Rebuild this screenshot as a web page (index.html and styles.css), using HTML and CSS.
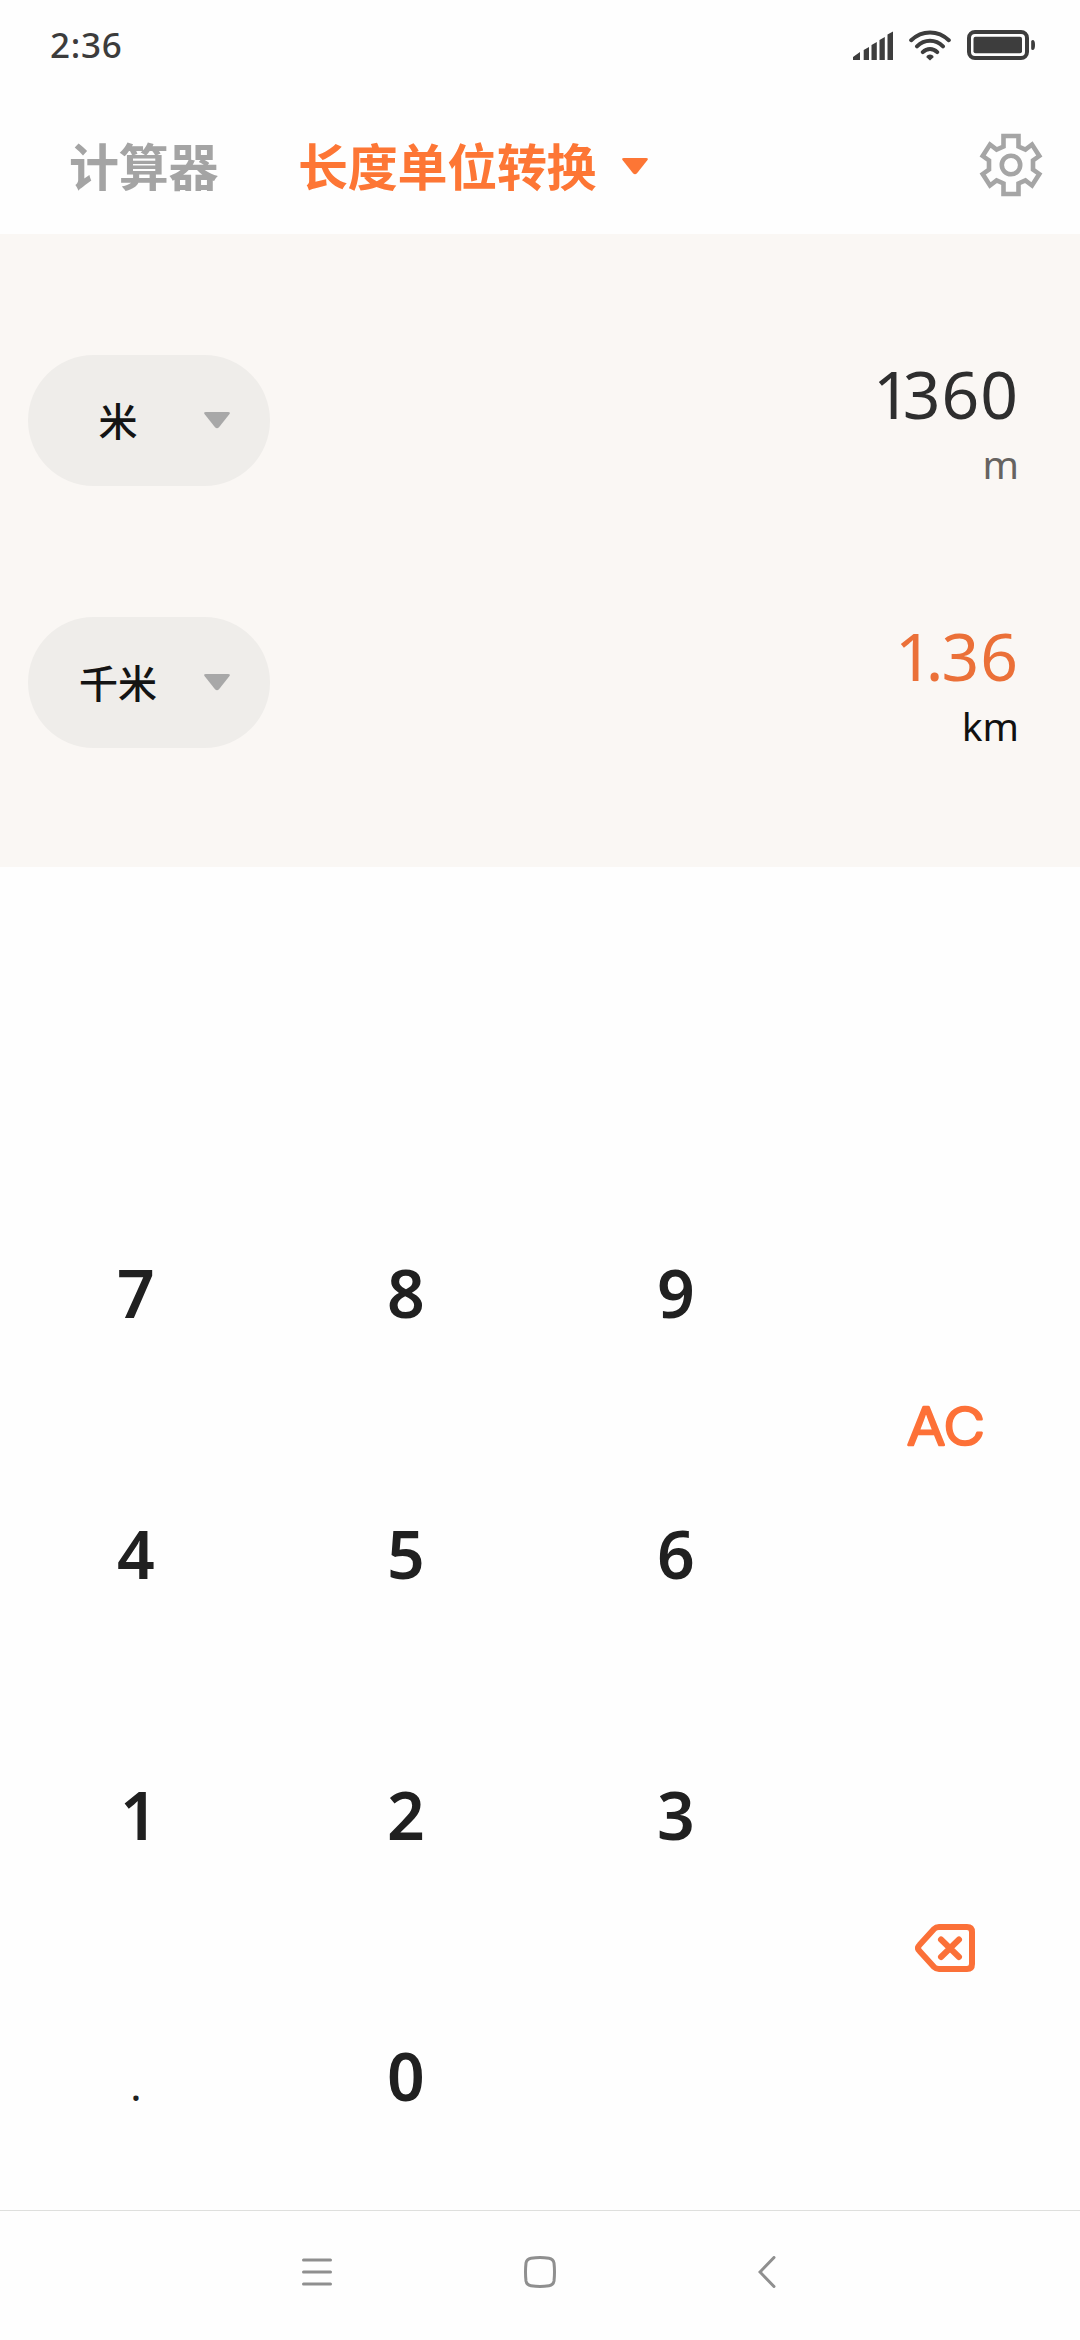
FILE: index.html
```
<!DOCTYPE html>
<html lang="zh-CN">
<head>
<meta charset="utf-8">
<title>长度单位转换</title>
<link rel="stylesheet" href="styles.css">
</head>
<body>
<div class="screen">
  <div class="status">
    <span class="time">2:36</span>
    <div class="status-icons">
      <svg class="signal" width="40" height="29" viewBox="0 0 40 29"><path d="M0 26l7-5v8H0zM10.700 19l5.300-3v13h-5.300zM18.500 14l5.300-3v18h-5.300zM26.500 9l5.300-3v23h-5.300zM34.500 3.500L40 .5V29h-5.500z"/></svg>
      <svg class="wifi" width="42" height="31" viewBox="0 0 42 31"><path class="arc" d="M2.200 10.200C13-.2 29-.2 39.800 10.200M8 16.300C15.500 8.800 26.500 8.800 34 16.300M13.800 22.100C18 18 24 18 28.200 22.100"/><path d="M21 30.500l-3.600-3.300c0-3.600 7.200-3.600 7.200 0z"/></svg>
      <svg class="battery" width="68" height="30" viewBox="0 0 68 30"><rect class="case" x="2" y="2" width="58" height="26" rx="6"/><rect x="6.500" y="6.700" width="48.500" height="16.600" rx="2"/><path d="M64.200 11.500q0-1.500 1.500-1.500 2.300 0 2.300 5t-2.300 5q-1.500 0-1.500-1.500z"/></svg>
    </div>
  </div>
  <header class="header">
    <span class="tab">计算器</span>
    <div class="tab active">长度单位转换<svg width="26" height="17" viewBox="0 0 26 17"><path d="M2 0h22q3 0 1.300 2.200L15 15.300q-2 2-4 0L.7 2.200Q-1 0 2 0z"/></svg></div>
    <svg class="gear" width="64" height="64" viewBox="-32 -32 64 64"><path d="M-7.500-29H7.500v10.500l6.900 3L21-20.500 28.300-9l-6.300 4.500v9L28.300 9 21 20.500l-6.600-5-6.900 3V29H-7.500V18.500l-6.900-3-6.600 5L-28.300 9l6.300-4.500v-9L-28.300-9-21-20.500l6.600 5 6.900-3z"/><circle r="9.200"/></svg>
  </header>
  <main class="panel">
    <section class="row">
      <div class="unit"><span class="unit-name">米</span><svg width="26" height="17" viewBox="0 0 26 17"><path d="M2 0h22q3 0 1.300 2.200L15 15.300q-2 2-4 0L.7 2.200Q-1 0 2 0z"/></svg></div>
      <div class="reading"><span class="value"><span class="lead">1</span>360</span><span class="symbol">m</span></div>
    </section>
    <section class="row result">
      <div class="unit"><span class="unit-name">千米</span><svg width="26" height="17" viewBox="0 0 26 17"><path d="M2 0h22q3 0 1.300 2.200L15 15.300q-2 2-4 0L.7 2.200Q-1 0 2 0z"/></svg></div>
      <div class="reading"><span class="value"><span class="lead">1</span><span class="point">.</span>36</span><span class="symbol">km</span></div>
    </section>
  </main>
  <div class="keypad">
    <div class="digits">
      <span>7</span><span>8</span><span>9</span>
      <span>4</span><span>5</span><span>6</span>
      <span class="one">1</span><span>2</span><span>3</span>
      <span class="dot">.</span><span>0</span>
    </div>
    <div class="actions">
      <svg class="clear" width="90" height="72" viewBox="0 0 90 72"><text x="7" y="54.500" textLength="78" lengthAdjust="spacingAndGlyphs">AC</text></svg>
      <svg class="erase" width="60" height="48" viewBox="0 0 60 48"><path d="M24 3H52q5 0 5 5v32q0 5-5 5H24q-3 0-5-2L4.500 27q-3-3 0-6L19 5q2-2 5-2z"/><path d="M26 15.500l18 17.500M44 15.500L26 33"/></svg>
    </div>
  </div>
  <nav class="navbar">
    <svg width="30" height="32" viewBox="0 0 30 32"><path d="M1.500 4h27M1.500 16h27M1.500 28h27"/></svg>
    <svg width="32" height="32" viewBox="0 0 32 32"><path d="M7 2.300Q16 .8 25 2.300 29.300 3 30 7 31 16 30 25 29.300 29 25 29.700 16 31.200 7 29.700 2.700 29 2 25 1 16 2 7 2.700 3 7 2.300z"/></svg>
    <svg width="18" height="32" viewBox="0 0 18 32"><path d="M16 1.500L2 16l14 14.500"/></svg>
  </nav>
</div>
</body>
</html>
```
FILE: styles.css
```
* { box-sizing: border-box; }
body {
  margin: 0;
  background: #fefefe;
  font-family: "Noto Sans", "Noto Sans CJK SC", sans-serif;
}
svg { display: block; flex: none; }
.screen {
  width: 1080px;
  height: 2340px;
  display: flex;
  flex-direction: column;
}
.status {
  height: 90px;
  display: flex;
  justify-content: space-between;
  align-items: center;
  padding: 0 45px 0 50px;
}
.time {
  font-size: 35px;
  line-height: 50px;
  font-weight: 500;
  letter-spacing: 0.7px;
  color: #3c3c3c;
}
.status-icons { display: flex; align-items: center; fill: #3d3d3d; }
.signal { margin-right: 16px; }
.wifi { margin-right: 16px; }
.arc, .case { fill: none; stroke: #3d3d3d; stroke-width: 4; }
.arc { stroke-linecap: round; }
.header {
  height: 144px;
  display: flex;
  align-items: center;
  padding: 0 37px 0 69px;
}
.tab {
  display: flex;
  align-items: center;
  font: 700 50px/60px "Noto Sans CJK SC", sans-serif;
  letter-spacing: -0.3px;
  color: #a4a4a4;
  height: 72px;
  padding-top: 3px;
}
.active { margin-left: 80px; color: #fd7635; }
.active svg { margin: 5px 0 0 26px; fill: #fd7635; }
.gear {
  margin-left: auto;
  margin-top: 5px;
  fill: none;
  stroke: #a5a5a5;
  stroke-width: 4.6;
}
.panel {
  height: 633px;
  background: #faf7f4;
  padding: 121px 61px 0 28px;
}
.row { display: flex; justify-content: space-between; height: 262px; }
.unit {
  width: 242px;
  height: 131px;
  border-radius: 66px;
  background: #efedea;
  display: flex;
  align-items: center;
  padding-right: 40px;
}
.unit svg { fill: #a8a8a8; }
.unit-name {
  width: 180px;
  flex: none;
  margin-right: -4px;
  padding-bottom: 3px;
  text-align: center;
  font: 500 39px/56px "Noto Sans CJK SC", sans-serif;
  color: #141414;
}
.reading {
  display: flex;
  flex-direction: column;
  align-items: flex-end;
  margin-top: -5px;
}
.value {
  font-size: 66px;
  line-height: 87px;
  letter-spacing: 1px;
  color: #2e2e2e;
}
.lead { letter-spacing: -8px; }
.result .lead { letter-spacing: -7px; }
.point { letter-spacing: -2px; }
.symbol {
  font-size: 39px;
  line-height: 54px;
  color: #666361;
}
.result .value { color: #eb7038; }
.result .symbol { color: #111; }
.keypad {
  height: 1343px;
  padding-top: 298px;
  display: flex;
}
.digits {
  width: 810px;
  display: grid;
  grid-template-columns: repeat(3, 270px);
  grid-template-rows: repeat(4, 261px);
}
.digits span {
  display: flex;
  align-items: center;
  justify-content: center;
  padding: 0 0 8px 2px;
  font-size: 66px;
  font-weight: 600;
  color: #202020;
}
.digits .one { padding-left: 8px; }
.digits .dot { font-size: 38px; font-weight: 500; padding: 15px 0 0 2px; }
.actions {
  width: 270px;
  display: grid;
  grid-template-rows: repeat(2, 522px);
  place-items: center;
}
.clear text {
  font: 300 52px "Inter", sans-serif;
  fill: #fd7138;
  stroke: #fd7138;
  stroke-width: 2.6;
  stroke-linejoin: round;
}
.erase {
  fill: none;
  stroke: #fb7038;
  stroke-width: 6;
  stroke-linecap: round;
}
.navbar {
  height: 130px;
  border-top: 1px solid #dedfdd;
  display: flex;
  align-items: center;
  gap: 202px;
  padding: 0 0 7px 302px;
  fill: none;
  stroke: #8f8f8f;
  stroke-width: 3;
  stroke-linecap: round;
}
.navbar svg:nth-child(2) { margin: 0 0 0 -10px; }
```
